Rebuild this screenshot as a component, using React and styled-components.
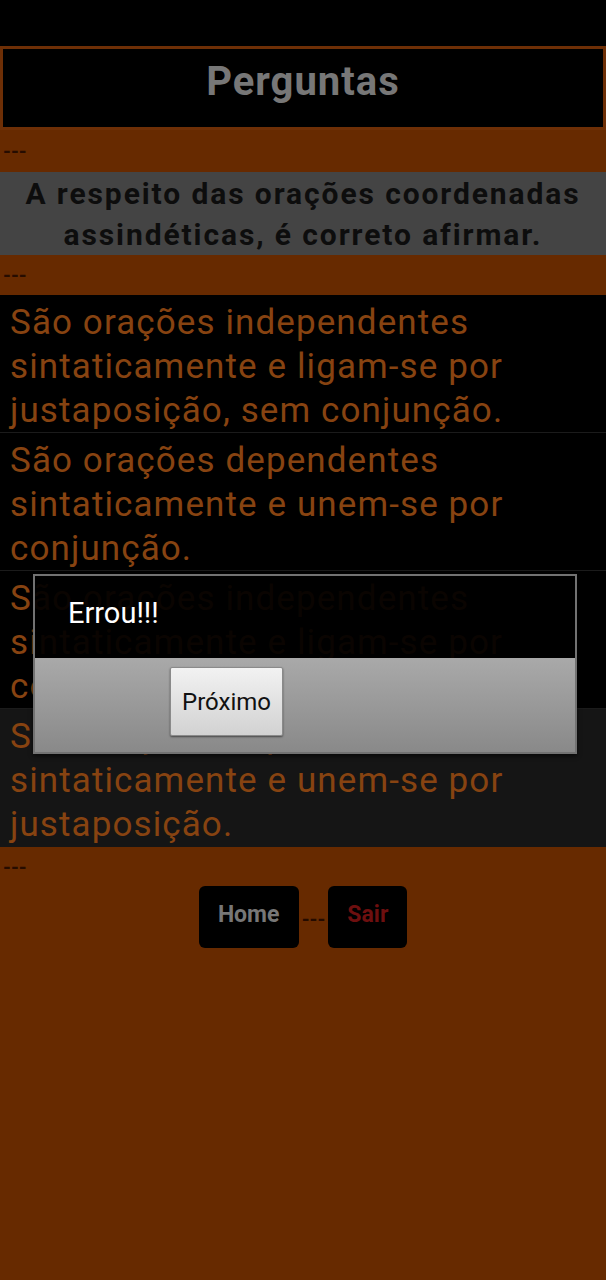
import React from "react";
import styled, { createGlobalStyle } from "styled-components";

const GlobalStyle = createGlobalStyle`
  body {
    margin: 0;
    background: #000;
    font-family: Roboto, "Liberation Sans", sans-serif;
  }
`;

const Screen = styled.div`
  position: relative;
  width: 606px;
  min-height: 1280px;
  display: flex;
  flex-direction: column;
  background: #672a00;
`;

const StatusBar = styled.div`
  height: 46px;
  background: #000;
`;

const Header = styled.div`
  height: 78px;
  box-sizing: content-box;
  border: 3px solid #6e2f06;
  background: #000;
  display: flex;
  align-items: center;
  justify-content: center;
  color: #777;
  font-size: 40px;
  font-weight: 700;
  letter-spacing: 1px;
  & > span {
    margin-top: -14px;
  }
`;

const Spacer = styled.div`
  height: ${(p) => p.h}px;
  display: flex;
  align-items: center;
  padding-left: 3px;
  color: #260c00;
  font-size: 20px;
  font-weight: 700;
`;

const Question = styled.div`
  height: 83px;
  background: #444;
  color: #0d0d0d;
  font-size: 30px;
  font-weight: 700;
  letter-spacing: 1.9px;
  line-height: 41px;
  text-align: center;
  display: flex;
  align-items: center;
  justify-content: center;
`;

const Option = styled.div`
  height: 138px;
  box-sizing: border-box;
  padding: 6px 10px 0 10px;
  background: ${(p) => (p.pressed ? "#151515" : "#000")};
  border-bottom: 1px solid ${(p) => (p.pressed ? "#151515" : "#1b1b1b")};
  color: #874311;
  font-size: 35px;
  letter-spacing: 1.1px;
  line-height: 44px;
`;

const ButtonRow = styled.div`
  display: flex;
  justify-content: center;
  align-items: center;
  gap: 3px;
`;

const NavButton = styled.div`
  width: ${(p) => p.w}px;
  height: 62px;
  box-sizing: border-box;
  padding-bottom: 6px;
  border-radius: 6px;
  background: #000;
  display: flex;
  align-items: center;
  justify-content: center;
  font-size: 23px;
  font-weight: 700;
  color: ${(p) => p.color};
`;

const Dash = styled.span`
  color: #240b00;
  font-size: 20px;
  font-weight: 700;
  padding-top: 4px;
`;

const Dialog = styled.div`
  position: absolute;
  left: 33px;
  top: 574px;
  width: 544px;
  box-sizing: border-box;
  border: 2px solid #727272;
  display: flex;
  flex-direction: column;
  box-shadow: 0 2px 4px rgba(0, 0, 0, 0.6);
`;

const DialogBody = styled.div`
  height: 82px;
  box-sizing: border-box;
  background: rgba(0, 0, 0, 0.93);
  display: flex;
  align-items: center;
  padding: 0 0 8px 33px;
  color: #fff;
  font-size: 29px;
`;

const DialogFooter = styled.div`
  height: 94px;
  background: linear-gradient(#a9a9a9, #898989);
  padding: 9px 0 0 135px;
  box-sizing: border-box;
`;

const DialogButton = styled.div`
  width: 113px;
  height: 69px;
  box-sizing: border-box;
  border: 1px solid #8a8a8a;
  border-radius: 2px;
  background: linear-gradient(#f2f2f2, #d2d2d2);
  box-shadow: 0 1px 2px rgba(0, 0, 0, 0.5);
  display: flex;
  align-items: center;
  justify-content: center;
  color: #111;
  font-size: 24px;
`;

const options = [
  "São orações independentes sintaticamente e ligam-se por justaposição, sem conjunção.",
  "São orações dependentes sintaticamente e unem-se por conjunção.",
  "São orações independentes sintaticamente e ligam-se por conjunção.",
  "São orações dependentes sintaticamente e unem-se por justaposição.",
];

export default function App() {
  return (
    <Screen>
      <GlobalStyle />
      <StatusBar />
      <Header>
        <span>Perguntas</span>
      </Header>
      <Spacer h={42}>---</Spacer>
      <Question>
        A respeito das orações coordenadas
        <br />
        assindéticas, é correto afirmar.
      </Question>
      <Spacer h={40}>---</Spacer>
      {options.map((text, i) => (
        <Option key={i} pressed={i === 3}>
          {text}
        </Option>
      ))}
      <Spacer h={39}>---</Spacer>
      <ButtonRow>
        <NavButton w={100} color="#777">
          Home
        </NavButton>
        <Dash>---</Dash>
        <NavButton w={79} color="#6e0f0f">
          Sair
        </NavButton>
      </ButtonRow>

      <Dialog>
        <DialogBody>Errou!!!</DialogBody>
        <DialogFooter>
          <DialogButton>Próximo</DialogButton>
        </DialogFooter>
      </Dialog>
    </Screen>
  );
}
